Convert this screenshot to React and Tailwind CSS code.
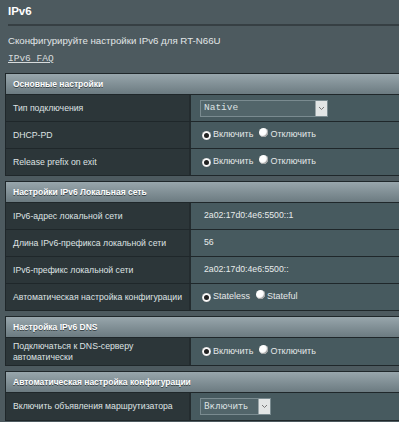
import React from "react";

function Radio({ checked }) {
  return checked ? (
    <span className="inline-flex w-[9px] h-[9px] rounded-full bg-white items-center justify-center shadow-[inset_0_0_1px_#555]">
      <span className="w-[5px] h-[5px] rounded-full bg-[#222]" />
    </span>
  ) : (
    <span className="inline-block w-[9px] h-[9px] rounded-full bg-white shadow-[inset_-1px_-1px_1px_#9a9a9a]" />
  );
}

function RadioPair({ a, b, checked = 0 }) {
  return (
    <div className="flex items-center text-[9px] text-[#e4e8e8]">
      <Radio checked={checked === 0} />
      <span className="ml-[2px]">{a}</span>
      <span className="ml-[6px]"><Radio checked={checked === 1} /></span>
      <span className="ml-[2px]">{b}</span>
    </div>
  );
}

function Chevron() {
  return (
    <svg width="7" height="5" viewBox="0 0 7 5">
      <path d="M1 1 L3.5 3.5 L6 1" fill="none" stroke="#777" strokeWidth="1" />
    </svg>
  );
}

function Section({ title, children }) {
  return (
    <div className="border-t border-b border-l border-[#1f272a] mb-[5px]">
      <div className="h-[20px] bg-gradient-to-b from-[#98a6ac] to-[#6c7b81] flex items-center pl-[7px] text-[8.5px] font-bold text-white [text-shadow:0_1px_0_#3a4548]">
        {title}
      </div>
      {children}
    </div>
  );
}

function Row({ label, children, h = "h-[27px]" }) {
  return (
    <div className={`flex border-t border-[#1f272a] ${h}`}>
      <div className="w-[185px] shrink-0 bg-[#2c3639] border-r-2 border-[#242c2f] flex items-center pl-[7px] text-[8.7px] leading-[11px] text-[#dfe3e4]">
        {label}
      </div>
      <div className="flex-1 bg-[#475a5f] flex items-center pl-[11px] text-[8.7px] text-[#e8ecec]">
        {children}
      </div>
    </div>
  );
}

export default function App() {
  return (
    <div className="w-[399px] h-[422px] overflow-hidden bg-[#4d5a5f] font-['Liberation_Sans',Arial,sans-serif] text-[#e6e9ea]">
      <div className="h-[24px] pl-2 pt-[4px] text-[11.5px] font-bold leading-[14px] text-white">IPv6</div>
      <div className="ml-2 h-[2px] bg-[#363f43]" />
      <div className="pl-2 mt-[9px] text-[9.7px] leading-[12px] text-[#e2e6e7]">
        Сконфигурируйте настройки IPv6 для RT-N66U
      </div>
      <div className="pl-2 mt-[3px] leading-[12px]">
        <span className="font-['Liberation_Mono',monospace] text-[9.5px] underline text-[#d8dcdd]">IPv6 FAQ</span>
      </div>
      <div className="ml-[5px] mt-[8px] w-[400px]">
        <Section title="Основные настройки">
          <Row label="Тип подключения">
            <div className="ml-[-2px] flex items-stretch h-[17px] w-[128px] border border-[#7a8b90] bg-[#52656a]">
              <div className="flex-1 flex items-center pl-[3px] font-['Liberation_Mono',monospace] text-[9.5px] text-[#dde2e3]">Native</div>
              <div className="w-[12px] bg-[#e2e5e5] flex items-center justify-center border-l border-[#9aa5a8]"><Chevron /></div>
            </div>
          </Row>
          <Row label="DHCP-PD">
            <RadioPair a="Включить" b="Отключить" />
          </Row>
          <Row label="Release prefix on exit">
            <RadioPair a="Включить" b="Отключить" />
          </Row>
        </Section>
        <Section title="Настройки IPv6 Локальная сеть">
          <Row label="IPv6-адрес локальной сети">
            <span className="pl-[2px]">2a02:17d0:4e6:5500::1</span>
          </Row>
          <Row label="Длина IPv6-префикса локальной сети">
            <span className="pl-[2px]">56</span>
          </Row>
          <Row label="IPv6-префикс локальной сети">
            <span className="pl-[2px]">2a02:17d0:4e6:5500::</span>
          </Row>
          <Row label="Автоматическая настройка конфигурации">
            <RadioPair a="Stateless" b="Stateful" />
          </Row>
        </Section>
        <Section title="Настройка IPv6 DNS">
          <Row label={<span>Подключаться к DNS-серверу<br />автоматически</span>} h="h-[28px]">
            <RadioPair a="Включить" b="Отключить" />
          </Row>
        </Section>
        <Section title="Автоматическая настройка конфигурации">
          <Row label="Включить объявления маршрутизатора" h="h-[28px]">
            <div className="ml-[-2px] flex items-stretch h-[17px] w-[71px] border border-[#7a8b90] bg-[#52656a]">
              <div className="flex-1 flex items-center pl-[3px] font-['DejaVu_Sans',sans-serif] text-[8.5px] text-[#dde2e3]">Включить</div>
              <div className="w-[12px] bg-[#e2e5e5] flex items-center justify-center border-l border-[#9aa5a8]"><Chevron /></div>
            </div>
          </Row>
        </Section>
      </div>
    </div>
  );
}
